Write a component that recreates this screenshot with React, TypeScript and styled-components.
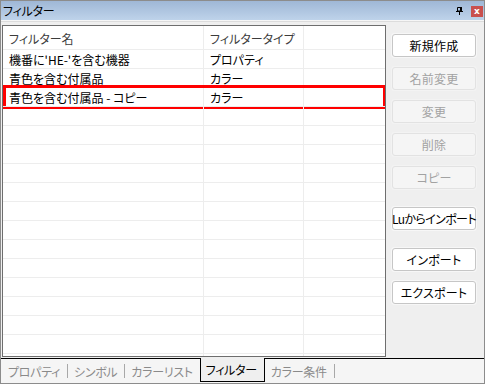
import React from "react";
import styled, { createGlobalStyle } from "styled-components";

const GlobalStyle = createGlobalStyle`
  html, body { margin: 0; padding: 0; background: #ffffff; }
  body {
    font-family: "Noto Sans CJK JP", "Noto Sans", sans-serif;
    font-size: 12px;
    font-feature-settings: "palt";
  }
  * { box-sizing: border-box; }
`;

const Window = styled.div`
  width: 485px;
  height: 384px;
  border: 1px solid #8c8c8c;
  background: #efefef;
  display: flex;
  flex-direction: column;
`;

const TitleBar = styled.div`
  height: 19px;
  background: linear-gradient(#9fb7d6, #bed3ea);
  display: flex;
  align-items: center;
  padding: 0 1px 0 2px;
  color: #000;
`;

const TitleSep = styled.div`
  height: 2px;
  background: #f6f6f6;
  border-bottom: 1px solid #dcdcdc;
`;

const Title = styled.div`
  flex: 1;
  line-height: 19px;
  letter-spacing: -0.2px;
`;

const PinIcon = styled.svg`
  width: 7px;
  height: 8px;
  margin-right: 8px;
  margin-top: 1px;
`;

const CloseBox = styled.div`
  width: 12px;
  height: 11px;
  background: #c9504e;
  color: #fff;
  font-family: "DejaVu Sans", sans-serif;
  font-size: 9px;
  font-weight: bold;
  line-height: 11px;
  text-align: center;
  margin-top: 1px;
`;

const Content = styled.div`
  height: 336px;
  display: flex;
  padding: 3px 0 1px 1px;
`;

const List = styled.div`
  width: 384px;
  height: 332px;
  border: 1px solid #6e6e6e;
  background: #fff;
  position: relative;
  overflow: hidden;
`;

const GridRow = styled.div<{ $header?: boolean }>`
  display: grid;
  grid-template-columns: 201px 100px 1fr;
  height: ${(p) => (p.$header ? "23px" : "19px")};
  border-top: ${(p) => (p.$header ? "none" : "1px solid #ededed")};
  position: relative;
`;

const Cell = styled.div<{ $header?: boolean; $last?: boolean }>`
  border-right: ${(p) => (p.$last ? "none" : "1px solid #ededed")};
  padding-left: 6px;
  display: flex;
  align-items: center;
  white-space: nowrap;
  color: ${(p) => (p.$header ? "#3c3c3c" : "#000")};
  padding-top: ${(p) => (p.$header ? "1px" : "0")};
`;

const Highlight = styled.div`
  position: absolute;
  left: 0;
  right: -1px;
  top: -3px;
  bottom: -3px;
  border: 3px solid #ff0000;
  pointer-events: none;
`;

const Side = styled.div`
  flex: 1;
  display: flex;
  flex-direction: column;
  padding: 9px 0 0 6px;
`;

const Button = styled.div<{ $disabled?: boolean; $gap: number; $tight?: boolean }>`
  width: 84px;
  height: 23px;
  margin-bottom: ${(p) => p.$gap}px;
  border: 1px solid ${(p) => (p.$disabled ? "#e2e2e2" : "#c6c6c6")};
  border-radius: 3px;
  background: ${(p) => (p.$disabled ? "#f5f5f5" : "#ffffff")};
  box-shadow: 0 0 0 1px ${(p) => (p.$disabled ? "#f3f3f3" : "#f7f7f7")};
  color: ${(p) => (p.$disabled ? "#a2a2a2" : "#000")};
  display: flex;
  align-items: center;
  justify-content: center;
  white-space: nowrap;
  letter-spacing: ${(p) => (p.$tight ? "-0.6px" : "0.2px")};
`;

const TabStrip = styled.div`
  height: 25px;
  border-top: 1px solid #000;
  background: #f5f5f5;
  display: flex;
  align-items: stretch;
  padding-left: 1px;
`;

const Tab = styled.div<{ $active?: boolean }>`
  display: flex;
  align-items: center;
  padding: 0 7px 0 ${(p) => (p.$active ? "5px" : "6px")};
  color: ${(p) => (p.$active ? "#000" : "#8a8a8a")};
  white-space: nowrap;
  letter-spacing: -0.3px;
  ${(p) =>
    p.$active
      ? `
    background: #efefef;
    border: 1px solid #000;
    border-top: none;
    margin-top: -1px;
    height: 24px;
  `
      : ""}
`;

const TabSep = styled.div`
  width: 1px;
  height: 14px;
  background: #a8a8a8;
  align-self: center;
`;

const columns = ["フィルター名", "フィルタータイプ"];
const rows: [string, string][] = [
  ["機番に'HE-'を含む機器", "プロパティ"],
  ["青色を含む付属品", "カラー"],
  ["青色を含む付属品 - コピー", "カラー"],
];

const buttons = [
  { label: "新規作成", disabled: false, gap: 10 },
  { label: "名前変更", disabled: true, gap: 10 },
  { label: "変更", disabled: true, gap: 10 },
  { label: "削除", disabled: true, gap: 10 },
  { label: "コピー", disabled: true, gap: 18 },
  { label: "Luからインポート", disabled: false, gap: 18, tight: true },
  { label: "インポート", disabled: false, gap: 10 },
  { label: "エクスポート", disabled: false, gap: 10 },
];

export default function App() {
  const emptyRows = Array.from({ length: 15 });
  return (
    <>
      <GlobalStyle />
      <Window>
        <TitleBar>
          <Title>フィルター</Title>
          <PinIcon viewBox="0 0 7 8">
            <path d="M1.5 0.5 H5.5 V4 H1.5 Z" fill="none" stroke="#000" strokeWidth="1" />
            <rect x="4" y="0" width="2" height="4" fill="#000" />
            <rect x="0" y="4" width="7" height="1" fill="#000" />
            <rect x="3" y="5" width="1" height="3" fill="#000" />
          </PinIcon>
          <CloseBox>x</CloseBox>
        </TitleBar>
        <TitleSep />
        <Content>
          <List>
            <GridRow $header>
              <Cell $header>{columns[0]}</Cell>
              <Cell $header>{columns[1]}</Cell>
              <Cell $header $last />
            </GridRow>
            {rows.map((r, i) => (
              <GridRow key={i}>
                <Cell>{r[0]}</Cell>
                <Cell>{r[1]}</Cell>
                <Cell $last />
                {i === 2 && <Highlight />}
              </GridRow>
            ))}
            {emptyRows.map((_, i) => (
              <GridRow key={"e" + i}>
                <Cell />
                <Cell />
                <Cell $last />
              </GridRow>
            ))}
          </List>
          <Side>
            {buttons.map((b) => (
              <Button key={b.label} $disabled={b.disabled} $gap={b.gap} $tight={b.tight}>
                {b.label}
              </Button>
            ))}
          </Side>
        </Content>
        <TabStrip>
          <Tab>プロパティ</Tab>
          <TabSep />
          <Tab>シンボル</Tab>
          <TabSep />
          <Tab>カラーリスト</Tab>
          <Tab $active>フィルター</Tab>
          <Tab>カラー条件</Tab>
          <TabSep />
        </TabStrip>
      </Window>
    </>
  );
}
